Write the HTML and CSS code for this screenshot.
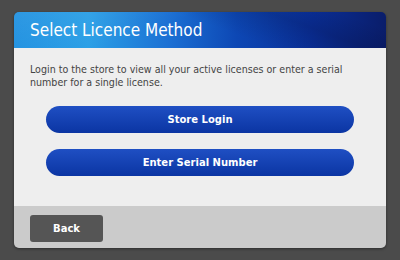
FILE: index.html
```html
<!DOCTYPE html>
<html lang="en">
<head>
    <meta charset="UTF-8">
    <title>Select Licence Method</title>
    <link rel="stylesheet" href="styles.css">
</head>
<body>

    <div class="dialog">
        <!-- Header -->
        <div class="dialog-header">
            <h2>Select Licence Method</h2>
        </div>

        <div class="dialog-body">
            <p>Login to the store to view all your active licenses or enter a serial number for a single license.</p>
            <div class="options">
                <button class="option">Store Login</button>
                <button class="option">Enter Serial Number</button>
            </div>
        </div>

        <!-- Footer -->
        <div class="dialog-footer">
            <button class="back">Back</button>
        </div>
    </div>

</body>
</html>
```

FILE: styles.css
```css
body {
    font-family: 'DejaVu Sans', Tahoma, sans-serif;
    margin: 0;
    padding: 12px 14px;
    background: #4b4b4b;
}

.dialog {
    width: 372px;
    height: 236px;
    display: flex;
    flex-direction: column;
    border-radius: 5px;
    overflow: hidden;
    box-shadow: 0 1px 3px rgba(0, 0, 0, 0.4);
}

/* Header */
.dialog-header {
    height: 36px;
    padding: 0 16px;
    display: flex;
    align-items: center;
    background:
        linear-gradient(160deg, rgba(255, 255, 255, 0.08) 0%, rgba(255, 255, 255, 0) 40%),
        linear-gradient(20deg, rgba(0, 0, 0, 0) 55%, rgba(0, 0, 30, 0.15) 75%, rgba(0, 0, 0, 0) 90%),
        linear-gradient(90deg, #1c8fe0 0%, #2a9fe6 20%, #1b6fd3 42%, #0d47b4 60%, #0a2f98 80%, #0a1d6a 100%);
}

.dialog-header h2 {
    margin: 0;
    color: #fff;
    font-family: 'DejaVu Sans Condensed', 'DejaVu Sans', sans-serif;
    font-size: 17px;
    font-weight: normal;
}

.dialog-body {
    flex: 1;
    background: #eeeeee;
    padding: 15px 16px 0;
}

.dialog-body p {
    margin: 0 0 17px;
    font-family: 'DejaVu Sans Condensed', 'DejaVu Sans', sans-serif;
    font-size: 10.6px;
    line-height: 13px;
    color: #444;
}

.options {
    display: flex;
    flex-direction: column;
    gap: 16px;
    padding: 0 16px;
}

.option {
    height: 27px;
    border: none;
    border-radius: 14px;
    background: linear-gradient(#1f4fc3, #0b35a3);
    color: #fff;
    font-family: 'DejaVu Sans', Tahoma, sans-serif;
    font-size: 10px;
    font-weight: bold;
    cursor: pointer;
}

/* Footer */
.dialog-footer {
    height: 42px;
    box-sizing: border-box;
    background: #cbcbcb;
    padding: 9px 16px;
}

.back {
    width: 73px;
    height: 27px;
    border: none;
    border-radius: 3px;
    background: #555555;
    color: #fff;
    font-family: 'DejaVu Sans', Tahoma, sans-serif;
    font-size: 10px;
    font-weight: bold;
    cursor: pointer;
}
```
